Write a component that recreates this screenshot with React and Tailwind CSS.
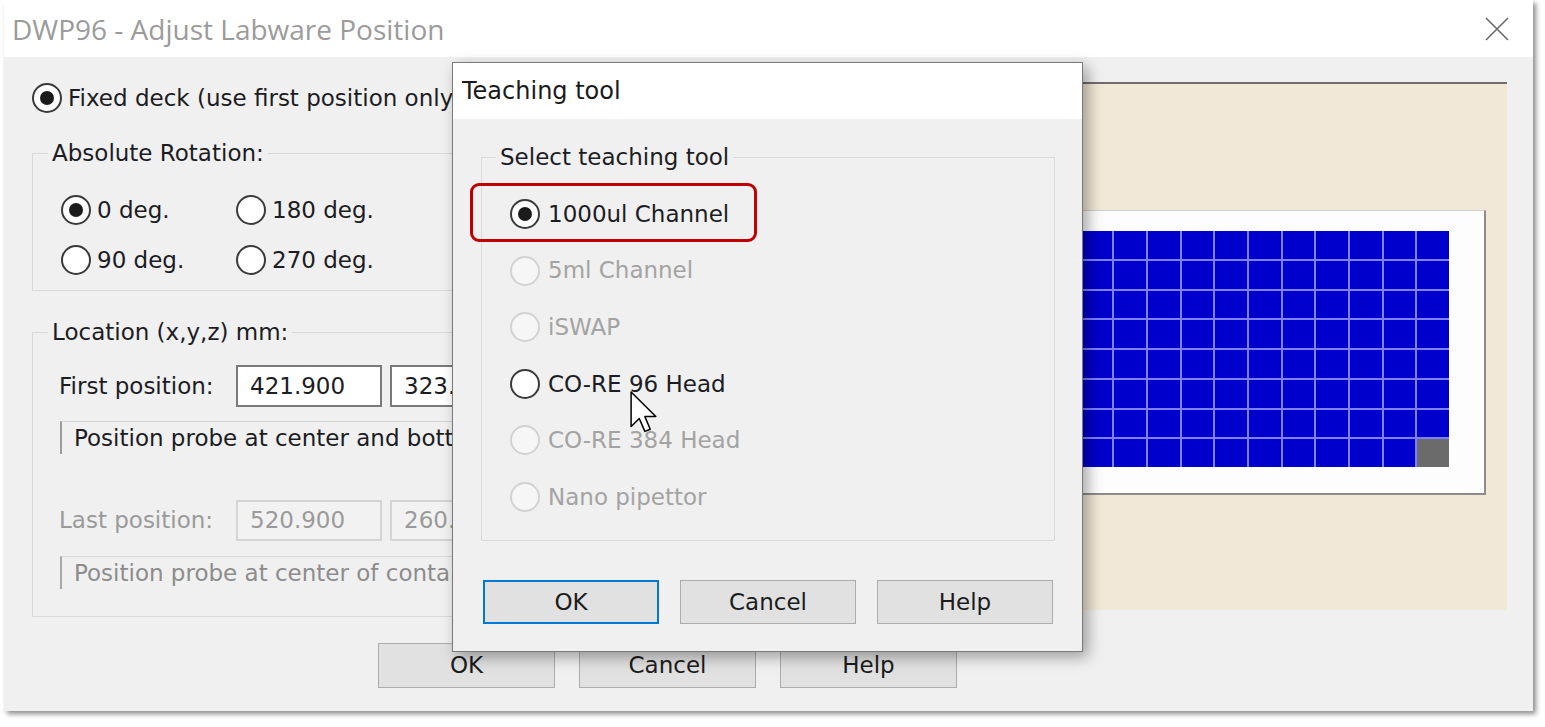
import React from 'react';

function Radio({ checked = false, disabled = false }) {
  return (
    <span
      className={`shrink-0 inline-flex items-center justify-center w-[30px] h-[30px] rounded-full border-2 ${
        disabled ? 'border-[#d2d2d2] bg-[#f6f6f6]' : 'border-[#3a3a3a] bg-white'
      }`}
    >
      {checked && <span className="w-[14px] h-[14px] rounded-full bg-[#1b1b1b]" />}
    </span>
  );
}

function WinButton({ children, focused = false, className = '' }) {
  return (
    <div
      className={`flex items-center justify-center bg-[#e1e1e1] text-[23px] text-[#1c1c1c] ${
        focused ? 'border-2 border-[#0078d7]' : 'border border-[#adadad]'
      } ${className}`}
    >
      {children}
    </div>
  );
}

const tools = [
  { name: '1000ul Channel', checked: true },
  { name: '5ml Channel', disabled: true },
  { name: 'iSWAP', disabled: true },
  { name: 'CO-RE 96 Head' },
  { name: 'CO-RE 384 Head', disabled: true },
  { name: 'Nano pipettor', disabled: true },
];

export default function App() {
  const wells = Array.from({ length: 96 }, (_, i) => i);

  return (
    <div className="relative w-[1545px] h-[727px] overflow-hidden bg-white font-['DejaVu_Sans',sans-serif] text-[#1c1c24]">
      {/* --- outer window --- */}
      <div className="ml-[4px] w-[1529px] h-[711px] flex flex-col bg-[#f0f0f0] shadow-[3px_3px_5px_rgba(0,0,0,0.45)]">
        <div className="h-[57px] shrink-0 bg-white flex items-center justify-between pl-[8px] pr-[24px]">
          <span className="font-['Open_Sans',sans-serif] text-[28px] text-[#9b9b9b] leading-none">DWP96 - Adjust Labware Position</span>
          <svg width="24" height="24" viewBox="0 0 24 24">
            <path d="M1 1 L23 23 M23 1 L1 23" stroke="#6a6a6a" strokeWidth="1.6" fill="none" />
          </svg>
        </div>

        <div className="flex-1 flex flex-col pl-[28px]">
          <div className="flex items-start">
            {/* left column, its right part lies under the dialog */}
            <div className="w-[958px] flex flex-col">
              <label className="mt-[26px] w-[420px] overflow-hidden whitespace-nowrap h-[30px] flex items-center gap-[6px] text-[23px] leading-none">
                <Radio checked />
                <span>Fixed deck (use first position only)</span>
              </label>

              <fieldset className="mt-[25px] w-[420px] overflow-hidden border border-r-0 border-[#d9d9d9] pl-[28px] pb-[15px]">
                <legend className="-ml-[13px] px-[4px] h-[30px] leading-[30px] text-[23px]">Absolute Rotation:</legend>
                <div className="mt-[27px] grid grid-cols-[175px_175px] gap-y-[20px] text-[23px]">
                  {[['0 deg.', true], ['180 deg.'], ['90 deg.'], ['270 deg.']].map(([t, c]) => (
                    <div key={t} className="h-[30px] flex items-center gap-[6px]">
                      <Radio checked={!!c} />
                      <span>{t}</span>
                    </div>
                  ))}
                </div>
              </fieldset>

              <fieldset className="mt-[26px] w-[420px] overflow-hidden border border-r-0 border-[#d9d9d9] pl-[26px] pb-[27px]">
                <legend className="-ml-[11px] px-[4px] h-[30px] leading-[30px] text-[23px]">Location (x,y,z) mm:</legend>
                <div className="mt-[18px] flex items-center text-[23px] whitespace-nowrap">
                  <span className="w-[177px] shrink-0">First position:</span>
                  <div className="shrink-0 w-[146px] h-[42px] bg-white border-2 border-[#7a7a7a] flex items-center pl-[12px]">421.900</div>
                  <div className="shrink-0 ml-[8px] w-[146px] h-[42px] bg-white border-2 border-[#7a7a7a] flex items-center pl-[12px]">323.900</div>
                </div>
                <div className="mt-[14px] ml-[1px] w-[600px] h-[33px] border-l-2 border-t border-l-[#9c9c9c] border-t-[#d4d4d4] flex items-center pl-[12px] text-[23px] whitespace-nowrap">
                  Position probe at center and bottom of container
                </div>
                <div className="mt-[46px] flex items-center text-[23px] text-[#9a9a9a] whitespace-nowrap">
                  <span className="w-[177px] shrink-0">Last position:</span>
                  <div className="shrink-0 w-[146px] h-[41px] bg-[#f2f2f2] border-2 border-[#d4d4d4] flex items-center pl-[12px]">520.900</div>
                  <div className="shrink-0 ml-[8px] w-[146px] h-[41px] bg-[#f2f2f2] border-2 border-[#d4d4d4] flex items-center pl-[12px]">260.900</div>
                </div>
                <div className="mt-[15px] ml-[1px] w-[600px] h-[33px] border-l-2 border-t border-l-[#a8a8a8] border-t-[#d8d8d8] flex items-center pl-[12px] text-[23px] text-[#8c8c8c] whitespace-nowrap">
                  Position probe at center of container
                </div>
              </fieldset>
            </div>

            {/* plate view */}
            <div className="ml-[10px] mt-[25px] w-[507px] h-[528px] bg-[#f2e8d8] border-t-2 border-[#6e6e6e]">
              <div className="ml-[25px] mt-[126px] w-[461px] h-[285px] bg-[#fdfdfd] border-t border-l border-[#d0d0d0] border-r-2 border-b-2 border-r-[#8c8c8c] border-b-[#8c8c8c] pl-[21px] pt-[20px]">
                <div className="w-[402px] h-[236px] grid grid-cols-12 grid-rows-8 gap-[2px] bg-[#8080ff]">
                  {wells.map((i) => (
                    <div key={i} className={i === 95 ? 'bg-[#6b6b6b]' : 'bg-[#0000cc]'} />
                  ))}
                </div>
              </div>
            </div>
          </div>

          <div className="mt-[26px] ml-[346px] flex gap-[24px]">
            <WinButton className="w-[177px] h-[45px]">OK</WinButton>
            <WinButton className="w-[177px] h-[45px]">Cancel</WinButton>
            <WinButton className="w-[177px] h-[45px]">Help</WinButton>
          </div>
        </div>
      </div>

      {/* --- Teaching tool dialog --- */}
      <div className="absolute left-[452px] top-[62px] w-[631px] h-[590px] flex flex-col bg-[#f0f0f0] border border-[#7a7a7a] shadow-[5px_5px_14px_rgba(0,0,0,0.35)]">
        <div className="h-[56px] shrink-0 bg-white flex items-center pl-[9px] text-[24px] text-[#1a1a1a]">Teaching tool</div>
        <fieldset className="mt-[23px] ml-[28px] w-[574px] border border-[#dadada] pl-[28px] pb-[28px]">
          <legend className="-ml-[14px] px-[4px] h-[30px] leading-[30px] text-[23px]">Select teaching tool</legend>
          <div className="mt-[27px] flex flex-col gap-[26.6px] text-[23px]">
            {tools.map((t) => (
              <div key={t.name} className={`h-[30px] flex items-center gap-[8px] ${t.disabled ? 'text-[#a3a3a3]' : ''}`}>
                <Radio checked={t.checked} disabled={t.disabled} />
                <span>{t.name}</span>
              </div>
            ))}
          </div>
        </fieldset>
        <div className="mt-[39px] ml-[30px] flex gap-[21px]">
          <WinButton focused className="w-[176px] h-[44px]">OK</WinButton>
          <WinButton className="w-[176px] h-[44px]">Cancel</WinButton>
          <WinButton className="w-[176px] h-[44px]">Help</WinButton>
        </div>
      </div>

      {/* annotation box */}
      <div className="absolute left-[470px] top-[183px] w-[287px] h-[59px] border-[3px] border-[#c00000] rounded-[9px]" />

      {/* mouse cursor */}
      <svg className="absolute left-[630px] top-[391px]" width="28" height="43" viewBox="0 0 13 20">
        <path d="M0.5 0.5 L0.5 16.5 L4.3 12.8 L6.9 18.8 L9.4 17.8 L6.9 11.9 L12 11.9 Z" fill="white" stroke="black" strokeWidth="0.7" strokeLinejoin="round" />
      </svg>
    </div>
  );
}
